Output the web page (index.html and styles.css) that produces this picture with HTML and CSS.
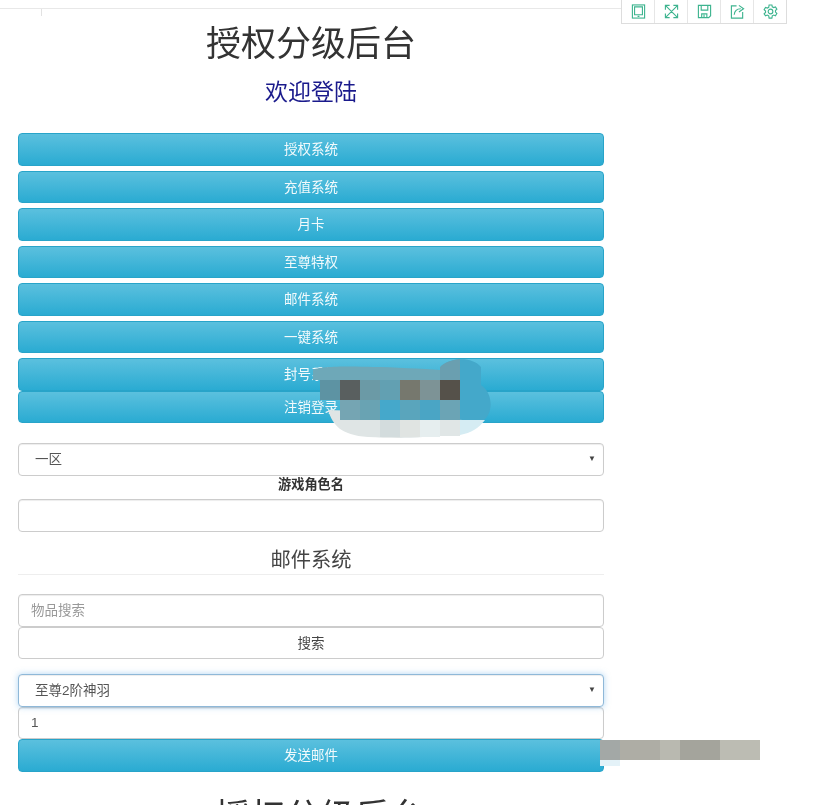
FILE: index.html
```html
<!DOCTYPE html>
<html lang="zh-CN">
<head>
  <meta charset="UTF-8" />
  <meta name="viewport" content="width=device-width, initial-scale=1.0"/>
  <title>授权分级后台</title>
  <link rel="stylesheet" href="styles.css">
</head>
<body>

<div class="top-line"><span class="top-tick"></span></div>

<main class="page">
  <h1 class="title">授权分级后台</h1>
  <h2 class="welcome">欢迎登陆</h2>

  <div class="menu">
    <button class="btn-info">授权系统</button>
    <button class="btn-info">充值系统</button>
    <button class="btn-info">月卡</button>
    <button class="btn-info">至尊特权</button>
    <button class="btn-info">邮件系统</button>
    <button class="btn-info">一键系统</button>
    <button class="btn-info btn-tight">封号系统</button>
    <button class="btn-info btn-tight">注销登录</button>
  </div>

  <div class="select-wrap">
    <select class="field field-select"><option>一区</option></select>
  </div>
  <label class="field-label">游戏角色名</label>
  <input class="field" type="text">

  <h3 class="section-title">邮件系统</h3>

  <input class="field" type="text" placeholder="物品搜索">
  <button class="btn-default">搜索</button>

  <div class="select-wrap select-gap">
    <select class="field field-select field-focus"><option>至尊2阶神羽</option></select>
  </div>
  <input class="field" type="text" value="1">
  <button class="btn-info">发送邮件</button>

  <h1 class="title title-next">授权分级后台</h1>
</main>

<div class="toolbar">
  <span class="tool">
    <svg viewBox="0 0 16 16"><rect x="1.500" y="1" width="13" height="14"/><path d="M3.800 3h8.400v8.500H3.800zM7 13.200h2"/></svg>
  </span>
  <span class="tool">
    <svg viewBox="0 0 16 16"><path d="M2 2l12 12M14 2L2 14M1.500 6V1.500H6M10 1.500h4.500V6M1.500 10v4.500H6M14.500 10v4.500H10"/></svg>
  </span>
  <span class="tool">
    <svg viewBox="0 0 16 16"><path d="M1.500 1.500h13v11l-2 2h-11zM4.500 2v4.500h7V2M5 14.500v-4h5.500v4M7.500 11.500v3"/></svg>
  </span>
  <span class="tool">
    <svg viewBox="0 0 16 16"><path d="M7 2H1.500v13h12V8.500M4.500 11.500C4.800 7.500 7.500 5 11.500 5M9.500 1.500l5 3.500-5 3.500"/></svg>
  </span>
  <span class="tool">
    <svg viewBox="0 0 16 16"><circle cx="8" cy="8" r="2.500"/><path d="M6.500 1h3l.4 2 1.500.8 1.900-.7 1.500 2.500-1.500 1.400v1.600l1.500 1.400-1.500 2.500-1.900-.7-1.500.8-.4 2.400h-3l-.4-2.400-1.500-.8-1.900.7L1.200 10.500l1.500-1.400V7.500L1.200 6.100l1.500-2.500 1.900.7 1.500-.8z"/></svg>
  </span>
</div>

<svg class="mosaic mosaic-menu" viewBox="0 0 180 85">
  <path fill="#dfe5e5" d="M15 55c5 15 12 25 40 27 40 2 90 3 115-22z"/>
  <path fill="#44a8ca" d="M130 10c10-8 30-8 38 2v18c12 8 13 28 2 36l-40-2z"/>
  <path fill="#6ea8b8" d="M0 15c4-4 40-4 60-3 20 0 50 2 67 3v10H0z"/>
  <path fill="#6a9fb0" d="M127 25V12c5-5 12-7 20-8v21z"/>
  <rect x="7" y="25" width="20" height="20" fill="#5d93a3"/>
  <rect x="27" y="25" width="20" height="20" fill="#595f5f"/>
  <rect x="47" y="25" width="20" height="20" fill="#6b9aa6"/>
  <rect x="67" y="25" width="20" height="20" fill="#62a0b2"/>
  <rect x="87" y="25" width="20" height="20" fill="#76786e"/>
  <rect x="107" y="25" width="20" height="20" fill="#7d9396"/>
  <rect x="127" y="25" width="20" height="20" fill="#55514a"/>
  <rect x="27" y="45" width="20" height="20" fill="#75a5b3"/>
  <rect x="47" y="45" width="20" height="20" fill="#69a3b3"/>
  <rect x="67" y="45" width="20" height="20" fill="#45a8cb"/>
  <rect x="87" y="45" width="20" height="20" fill="#5aa5bc"/>
  <rect x="107" y="45" width="20" height="20" fill="#4aa5c5"/>
  <rect x="127" y="45" width="20" height="20" fill="#6ba4b5"/>
  <rect x="67" y="65" width="20" height="17" fill="#d3dcdd"/>
  <rect x="87" y="65" width="20" height="17" fill="#e0e4e2"/>
  <rect x="107" y="65" width="20" height="17" fill="#e6eeef"/>
  <rect x="127" y="65" width="20" height="16" fill="#e0e6e6"/>
  <path fill="#d5ecf3" d="M147 65h25c-6 8-14 13-25 15z"/>
</svg>

<svg class="mosaic mosaic-send" viewBox="0 0 160 26">
  <rect x="0" y="20" width="20" height="6" fill="#e4f2f8"/>
  <rect x="0" y="0" width="20" height="20" fill="#a3a8a6"/>
  <rect x="20" y="0" width="40" height="20" fill="#aeada5"/>
  <rect x="60" y="0" width="20" height="20" fill="#b9b9b0"/>
  <rect x="80" y="0" width="40" height="20" fill="#a4a49c"/>
  <rect x="120" y="0" width="40" height="20" fill="#bcbcb3"/>
</svg>

</body>
</html>
```

FILE: styles.css
```css
* {
  box-sizing: border-box;
}

html, body {
  height: 805px;
  overflow: hidden;
}

body {
  background-color: #fff;
  color: #333;
  font-family: "Liberation Sans", "Noto Sans CJK SC", sans-serif;
  font-size: 14px;
  margin: 0;
  position: relative;
}

.top-line {
  margin-top: 8px;
  height: 8px;
  width: 622px;
  border-top: 1px solid #e8e8e8;
  position: absolute;
  top: 0;
  left: 0;
}

.top-tick {
  position: absolute;
  left: 41px;
  top: 0;
  height: 7px;
  border-left: 1px solid #e2e2e2;
}

.toolbar {
  position: absolute;
  top: 0;
  left: 621px;
  display: flex;
  width: 166px;
  height: 24px;
  background: #fff;
  border: 1px solid #ddd;
  border-top: 0;
}

.tool {
  flex: 1;
  display: flex;
  align-items: center;
  justify-content: center;
  border-right: 1px solid #e6e6e6;
}

.tool:last-child {
  border-right: 0;
}

.tool svg {
  width: 15px;
  height: 15px;
  fill: none;
  stroke: #3eb48f;
  stroke-width: 1.200;
}

.page {
  width: 586px;
  margin-left: 18px;
  padding-top: 19px;
  filter: blur(0.4px);
}

.title {
  font-size: 35px;
  font-weight: 400;
  line-height: 50px;
  height: 50px;
  margin: 0;
  text-align: center;
  color: #333;
}

.welcome {
  font-size: 23px;
  font-weight: 400;
  line-height: 34px;
  margin: 6px 0 24px;
  text-align: center;
  color: #1a1a8c;
}

.menu {
  margin-bottom: 20px;
}

.btn-info, .btn-default {
  display: block;
  width: 100%;
  height: 32.500px;
  padding: 0 0 2px;
  font-family: inherit;
  font-size: 13.500px;
  border-radius: 4px;
  text-align: center;
}

.btn-info {
  color: #f2fafc;
  background: linear-gradient(to bottom, #5bc0de, #2aabd2);
  border: 1px solid #28a4c9;
  margin-bottom: 5px;
}

.btn-tight {
  margin-bottom: 0;
}

.btn-default {
  color: #444;
  background: #fff;
  border: 1px solid #ccc;
}

.field {
  display: block;
  width: 100%;
  height: 32.500px;
  padding: 0 12px;
  font-family: inherit;
  font-size: 13.500px;
  color: #555;
  background: #fff;
  border: 1px solid #ccc;
  border-radius: 4px;
  box-shadow: inset 0 1px 1px rgba(0,0,0,0.075);
}

.field::placeholder {
  color: #999;
}

.field-select {
  appearance: none;
  padding-left: 16px;
}

.field-focus {
  border-color: #8fb8d8;
  box-shadow: inset 0 1px 1px rgba(0,0,0,0.075), 0 0 6px rgba(102,175,233,0.5);
}

.select-wrap {
  position: relative;
}

.select-wrap::after {
  content: "▼";
  position: absolute;
  right: 8px;
  top: 11px;
  font-size: 8px;
  line-height: 10px;
  color: #444;
  pointer-events: none;
}

.select-gap {
  margin-top: 15px;
}

.field-label {
  display: block;
  font-size: 13.200px;
  font-weight: 700;
  line-height: 18px;
  margin-bottom: 5.500px;
  text-align: center;
}

.section-title {
  font-size: 20.300px;
  font-weight: 400;
  line-height: 27.500px;
  margin: 15px 0 19px;
  text-align: center;
  color: #444;
  border-bottom: 1px solid #eee;
}

.title-next {
  margin-top: 20.500px;
  padding-left: 18px;
}

.mosaic {
  position: absolute;
  display: block;
}

.mosaic-menu {
  left: 313px;
  top: 355px;
  width: 180px;
  height: 85px;
}

.mosaic-send {
  left: 600px;
  top: 740px;
  width: 160px;
  height: 26px;
}
```
